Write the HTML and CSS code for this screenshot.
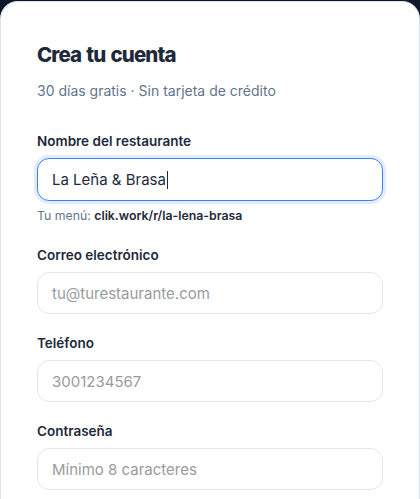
FILE: index.html
```html
<!DOCTYPE html>
<html lang="es">
<head>
<meta charset="utf-8">
<title>Crea tu cuenta</title>
<link rel="stylesheet" href="styles.css">
</head>
<body>
<main class="card">
  <header class="head">
    <h1 class="title">Crea tu cuenta</h1>
    <p class="subtitle">30 días gratis · Sin tarjeta de crédito</p>
  </header>
  <form class="form">
    <div class="field">
      <label class="label">Nombre del restaurante</label>
      <div class="input is-focus"><span class="value">La Leña &amp; Brasa</span><span class="caret"></span></div>
      <p class="hint">Tu menú: <strong>clik.work/r/la-lena-brasa</strong></p>
    </div>
    <div class="field">
      <label class="label">Correo electrónico</label>
      <div class="input"><span class="placeholder">tu@turestaurante.com</span></div>
    </div>
    <div class="field">
      <label class="label">Teléfono</label>
      <div class="input"><span class="placeholder">3001234567</span></div>
    </div>
    <div class="field">
      <label class="label">Contraseña</label>
      <div class="input"><span class="placeholder">Mínimo 8 caracteres</span></div>
    </div>
  </form>
</main>
</body>
</html>
```

FILE: styles.css
```css
* { box-sizing: border-box; }
html, body { margin: 0; padding: 0; }
body {
  background: #0f172a;
  font-family: Inter, "Noto Sans", sans-serif;
  height: 499px;
  overflow: hidden;
  padding-top: 1px;
}
.card {
  background: #ffffff;
  border: 1px solid #dbe3ee;
  border-bottom: none;
  border-radius: 18px 18px 0 0;
  padding: 39px 36px 40px;
  min-height: 600px;
}
.head { margin-bottom: 31px; }
.title {
  margin: 0;
  font-size: 20.5px;
  line-height: 28px;
  font-weight: 800;
  letter-spacing: -0.9px;
  word-spacing: 1.5px;
  color: #1e293b;
}
.subtitle {
  margin: 12px 0 0;
  font-size: 14px;
  line-height: 20px;
  color: #64748b;
}
.form { display: flex; flex-direction: column; gap: 20px; }
.field { display: flex; flex-direction: column; }
.label {
  font-size: 13.5px;
  line-height: 18px;
  font-weight: 600;
  color: #1e293b;
  margin-bottom: 8px;
}
.input {
  height: 42px;
  border: 1px solid #e2e8f0;
  border-radius: 12px;
  padding: 0 14px;
  display: flex;
  align-items: center;
  font-size: 15px;
  background: #fff;
}
.input.is-focus {
  height: 43px;
  border-color: #3b82f6;
  box-shadow: 0 0 0 3px rgba(59, 130, 246, 0.15);
}
.value { color: #1e293b; }
.caret {
  display: inline-block;
  width: 1px;
  height: 18px;
  background: #1e293b;
  margin-left: 1px;
}
.placeholder { color: #9a9a9e; }
.hint {
  margin: 7px 0 2px;
  font-size: 12.3px;
  line-height: 16px;
  color: #64748b;
}
.hint strong { color: #1e293b; font-weight: 600; }
```
